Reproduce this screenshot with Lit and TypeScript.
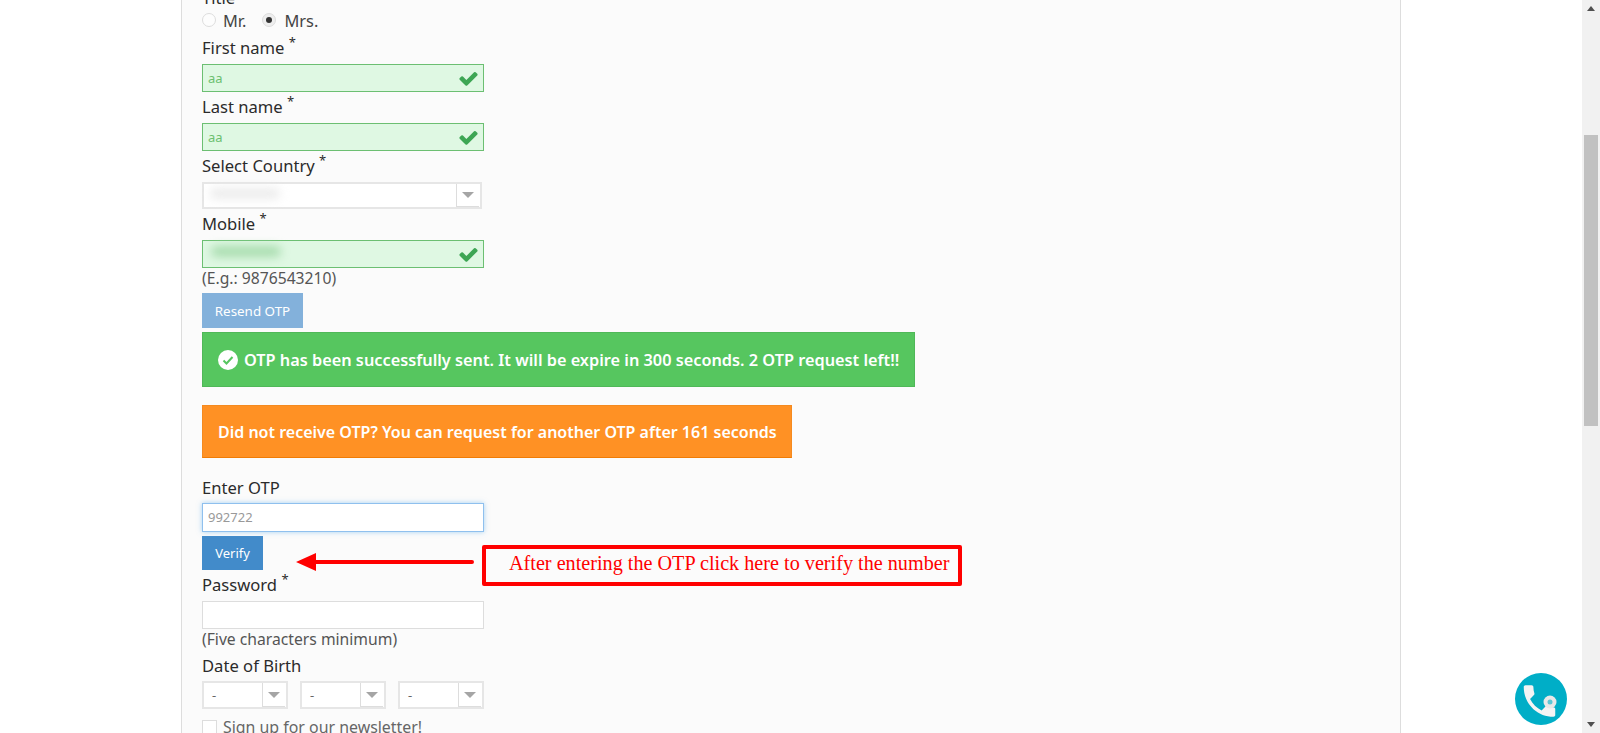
import { LitElement, html, css, svg } from 'lit';
import { customElement } from 'lit/decorators.js';

const CHECK = svg`<path d="M1671 566q0 40-28 68l-724 724-136 136q-28 28-68 28t-68-28l-136-136-362-362q-28-28-28-68t28-68l136-136q28-28 68-28t68 28l294 295 656-657q28-28 68-28t68 28l136 136q28 28 28 68z"/>`;

@customElement('app-root')
export class AppRoot extends LitElement {
  static styles = css`
    :host {
      display: block;
      position: relative;
      height: 733px;
      overflow: hidden;
      background: #fff;
      font-family: 'Noto Sans', 'Liberation Sans', sans-serif;
      font-size: 15px;
      color: #333;
    }
    * {
      box-sizing: border-box;
    }
    .page {
      display: flex;
      height: 733px;
    }
    .main {
      flex: 1;
      padding-left: 181px;
      padding-right: 181px;
      overflow: hidden;
    }
    .panel {
      height: 800px;
      margin-top: -17px;
      padding-left: 20px;
      background: #fbfbfb;
      border-left: 1px solid #ddd;
      border-right: 1px solid #ddd;
    }
    .scrollbar {
      flex: none;
      position: relative;
      width: 18px;
      background: #f1f1f1;
      display: flex;
      flex-direction: column;
      align-items: center;
      justify-content: space-between;
      padding: 6px 0;
    }
    .thumb {
      position: absolute;
      left: 2px;
      top: 135px;
      width: 14px;
      height: 291px;
      background: #c1c1c1;
    }
    .tri {
      width: 0;
      height: 0;
      border-left: 4px solid transparent;
      border-right: 4px solid transparent;
    }
    .tri.up {
      border-bottom: 5px solid #505050;
    }
    .tri.down {
      border-top: 5px solid #505050;
    }
    .label {
      height: 31px;
      padding-top: 5px;
      line-height: 20px;
      font-size: 16.6px;
      color: #2b2b2b;
    }
    .label.title {
      height: 24px;
    }
    .label.plain {
      height: 28px;
      margin-top: 17px;
      padding-top: 3px;
    }
    .label.dob-label {
      height: 30px;
      margin-top: 0;
      padding-top: 5px;
    }
    .label sup {
      font-size: 13px;
      line-height: 0;
    }
    .radios {
      display: flex;
      align-items: center;
      height: 26px;
      font-size: 16.4px;
      color: #444;
    }
    .radio {
      width: 14px;
      height: 14px;
      margin-right: 7px;
      border-radius: 50%;
      border: 1px solid #ddd;
      background: #fdfdfd;
      display: flex;
      align-items: center;
      justify-content: center;
    }
    .radio.on {
      margin-left: 16px;
      margin-right: 8px;
      background: #eee;
    }
    .radio.on::after {
      content: '';
      width: 6px;
      height: 6px;
      border-radius: 50%;
      background: #333;
    }
    .input {
      position: relative;
      width: 282px;
      height: 28px;
      border: 1px solid #ddd;
      background: #fff;
      padding-left: 5px;
      line-height: 26px;
      font-size: 13px;
    }
    .input.ok {
      background: #dff8e3;
      border-color: #6cbf72;
      color: #6cc070;
    }
    .input.focus {
      height: 29px;
      border-color: #8fc0ee;
      box-shadow: 0 0 5px rgba(82, 168, 236, 0.5);
      color: #999;
    }
    .input svg {
      position: absolute;
      right: 4px;
      top: 3px;
      width: 21px;
      height: 21px;
      fill: #3da654;
    }
    .smudge {
      position: absolute;
      left: 8px;
      top: 5px;
      width: 70px;
      height: 11px;
      border-radius: 6px;
      filter: blur(5px);
      background: #a8dcae;
    }
    .select {
      position: relative;
      height: 28px;
      border: 2px solid #e6e6e6;
      background: #fff;
      padding-left: 8px;
      line-height: 24px;
      font-size: 13px;
      color: #666;
    }
    .select.country {
      width: 280px;
      height: 27px;
    }
    .select .smudge {
      background: #ececec;
      top: 4px;
      left: 6px;
    }
    .select .btn {
      position: absolute;
      right: 1px;
      top: 0;
      bottom: 0;
      width: 23px;
      background: #fff;
      border-left: 1px solid #ddd;
      border-bottom: 1px solid #ddd;
      display: flex;
      align-items: center;
      justify-content: center;
    }
    .select .btn::after {
      content: '';
      border-left: 6px solid transparent;
      border-right: 6px solid transparent;
      border-top: 6px solid #a5a5a5;
    }
    .help {
      height: 22px;
      line-height: 21px;
      font-size: 15.7px;
      color: #555;
    }
    .button {
      display: flex;
      align-items: center;
      justify-content: center;
      height: 35px;
      font-size: 13.4px;
      color: #fff;
      background: #428bca;
    }
    .button.resend {
      width: 101px;
      margin-top: 3px;
      background: #83b1db;
    }
    .button.verify {
      width: 61px;
      height: 34px;
      margin-top: 4px;
      font-size: 13px;
    }
    .alert {
      display: flex;
      align-items: center;
      gap: 6px;
      padding-left: 15px;
      height: 55px;
      color: #fff;
      font-weight: 600;
      font-size: 16.3px;
      border: 1px solid #4fb858;
    }
    .alert.success {
      width: 713px;
      margin-top: 4px;
      background: #56c65f;
    }
    .alert.warning {
      width: 590px;
      height: 53px;
      margin-top: 18px;
      font-size: 16px;
      background: #ff9124;
      border-color: #f58a1f;
      border-bottom-color: #f07c05;
    }
    .alert svg {
      width: 20px;
      height: 20px;
      flex: none;
    }
    .dob {
      display: flex;
      gap: 12px;
      width: 282px;
    }
    .dob .select {
      flex: 1;
    }
    .newsletter {
      display: flex;
      align-items: center;
      gap: 6px;
      margin-top: 11px;
      line-height: 15px;
      font-size: 15.9px;
      color: #666;
    }
    .box {
      width: 15px;
      height: 15px;
      border: 1px solid #ddd;
      background: #fff;
    }
    .note {
      position: absolute;
      left: 482px;
      top: 545px;
      width: 480px;
      height: 41px;
      border: 4px solid #f00;
      border-radius: 2px;
      padding-left: 23px;
      line-height: 29px;
      font-family: 'Liberation Serif', serif;
      font-size: 20.2px;
      color: #f00;
      white-space: nowrap;
      background: #fbfbfb;
    }
    .arrow {
      position: absolute;
      left: 294px;
      top: 550px;
    }
    .call {
      position: absolute;
      left: 1515px;
      top: 673px;
    }
  `;

  private field(name: string) {
    return html`<div class="label">${name} <sup>*</sup></div>`;
  }

  private okInput(value: string | null) {
    return html`<div class="input ok">
      ${value ?? html`<div class="smudge"></div>`}
      <svg viewBox="0 0 1792 1792">${CHECK}</svg>
    </div>`;
  }

  render() {
    return html`
      <div class="page">
        <div class="main">
          <div class="panel">
            <div class="label title">Title</div>
            <div class="radios">
              <span class="radio"></span>Mr.
              <span class="radio on"></span>Mrs.
            </div>
            ${this.field('First name')} ${this.okInput('aa')}
            ${this.field('Last name')} ${this.okInput('aa')}
            ${this.field('Select Country')}
            <div class="select country"><div class="smudge"></div><div class="btn"></div></div>
            ${this.field('Mobile')} ${this.okInput(null)}
            <div class="help">(E.g.: 9876543210)</div>
            <div class="button resend">Resend OTP</div>
            <div class="alert success">
              <svg viewBox="0 0 20 20">
                <circle cx="10" cy="10" r="10" fill="#fff" />
                <path d="M5.5 10.5l3 3 6-6.5" fill="none" stroke="#56c65f" stroke-width="2" />
              </svg>
              OTP has been successfully sent. It will be expire in 300 seconds. 2 OTP request left!!
            </div>
            <div class="alert warning">
              Did not receive OTP? You can request for another OTP after 161 seconds
            </div>
            <div class="label plain">Enter OTP</div>
            <div class="input focus">992722</div>
            <div class="button verify">Verify</div>
            ${this.field('Password')}
            <div class="input"></div>
            <div class="help">(Five characters minimum)</div>
            <div class="label plain dob-label">Date of Birth</div>
            <div class="dob">
              <div class="select">-<div class="btn"></div></div>
              <div class="select">-<div class="btn"></div></div>
              <div class="select">-<div class="btn"></div></div>
            </div>
            <div class="newsletter"><span class="box"></span>Sign up for our newsletter!</div>
          </div>
        </div>
        <div class="scrollbar">
          <div class="tri up"></div>
          <div class="thumb"></div>
          <div class="tri down"></div>
        </div>
      </div>
      <svg class="arrow" width="182" height="24" viewBox="0 0 182 24">
        <path d="M2 12L22 3v7h156a2 2 0 0 1 0 4H22v7z" fill="#f00" />
      </svg>
      <div class="note">After entering the OTP click here to verify the number</div>
      <svg class="call" width="52" height="52" viewBox="0 0 52 52">
        <circle cx="26" cy="26" r="26" fill="#00aec7" />
        <g transform="translate(3.5 7) scale(1.75)">
          <path
            d="M6.62 10.79c1.44 2.83 3.76 5.14 6.59 6.59l2.2-2.2c.27-.27.67-.36 1.02-.24 1.12.37 2.33.57 3.57.57.55 0 1 .45 1 1V20c0 .55-.45 1-1 1-9.39 0-17-7.61-17-17 0-.55.45-1 1-1h3.5c.55 0 1 .45 1 1 0 1.25.2 2.45.57 3.57.11.35.03.74-.25 1.02l-2.2 2.2z"
            fill="#f4f4f4"
          />
        </g>
        <circle cx="35" cy="29" r="6.5" fill="#e8e8e8" />
        <circle cx="35" cy="29" r="2.5" fill="#5cc6d6" />
      </svg>
    `;
  }
}

declare global {
  interface HTMLElementTagNameMap {
    'app-root': AppRoot;
  }
}
